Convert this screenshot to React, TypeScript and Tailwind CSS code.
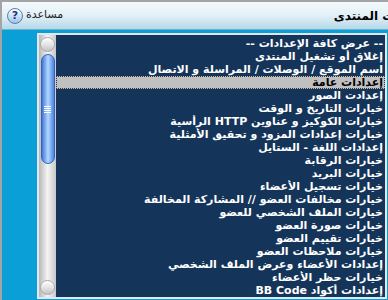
const options = [
  '-- عرض كافة الإعدادات --',
  'إغلاق أو تشغيل المنتدى',
  'اسم الموقع / الوصلات / المراسلة و الاتصال',
  'إعدادات عامة',
  'إعدادت الصور',
  'خيارات التاريخ و الوقت',
  'خيارات الكوكيز و عناوين HTTP الرأسية',
  'خيارات إعدادات المزود و تحقيق الأمثلية',
  'إعدادات اللغة - الستايل',
  'خيارات الرقابة',
  'خيارات البريد',
  'خيارات تسجيل الأعضاء',
  'خيارات مخالفات العضو // المشاركة المخالفة',
  'خيارات الملف الشخصي للعضو',
  'خيارات صورة العضو',
  'خيارات تقييم العضو',
  'خيارات ملاحظات العضو',
  'إعدادات الأعضاء وعرض الملف الشخصي',
  'خيارات حظر الأعضاء',
  'إعدادات أكواد BB Code',
];

const selected = 3;

const RoundButton = () => (
  <div className="mx-auto h-[15px] w-[15px] rounded-full border border-[#a8a8a8] bg-linear-to-b from-[#ffffff] via-[#e4e4e4] to-[#c4c4c4] shadow-[inset_0_1px_1px_#fff]" />
);

const Scrollbar = () => (
  <div className="flex w-[17px] shrink-0 flex-col bg-linear-to-r from-[#b8b8b8] via-[#f4f4f4] to-[#c8c8c8] py-[2px]">
    <RoundButton />
    <div className="mx-auto mt-[2px] flex h-[110px] w-[14px] items-center justify-center rounded-full border border-[#3464b8] bg-linear-to-r from-[#3f78d8] via-[#b4d8ff] to-[#4a82e0]">
      <div className="flex flex-col gap-[1px]">
        <div className="h-px w-[7px] bg-white" />
        <div className="h-px w-[7px] bg-white" />
        <div className="h-px w-[7px] bg-white" />
        <div className="h-px w-[7px] bg-white" />
      </div>
    </div>
    <div className="flex-1" />
    <RoundButton />
  </div>
);

export default function App() {
  return (
    <div className="flex h-[300px] w-[388px] flex-col overflow-hidden border-l-2 border-t-2 border-[#a4a4a4] font-['DejaVu_Sans',sans-serif]">
      {/* header */}
      <div className="flex h-[28px] shrink-0 items-center justify-between border-b border-[#6eb2cc] bg-linear-to-b from-[#f4fafd] via-[#e2f0f7] to-[#b4d8e8]">
        <div className="flex items-center gap-[3px] pl-[5px]">
          <div className="flex h-[16px] w-[16px] items-center justify-center rounded-full border border-[#5a7ea8] bg-linear-to-b from-[#ffffff] to-[#9cc4ec] text-[11px] font-bold leading-none text-[#1a3c78]">
            ?
          </div>
          <span dir="rtl" className="text-[11px] text-[#222]">مساعدة</span>
        </div>
        <span dir="rtl" className="mr-[-40px] whitespace-nowrap text-[12px] font-bold text-black">
          إعدادات المنتدى
        </span>
      </div>

      {/* body */}
      <div className="flex flex-1 bg-[#0a9fd6] pb-[3px] pl-[35px] pr-[1px] pt-[3px]">
        <div className="flex flex-1 border-2 border-[#dfe8ef] bg-[#143459]">
          <Scrollbar />
          <div dir="rtl" className="flex-1 pt-[2px]">
            {options.map((o, i) => (
              <div
                key={i}
                className={
                  i === selected
                    ? 'h-[13px] overflow-hidden whitespace-nowrap bg-[#c0c0c0] pr-[2px] text-[11px] font-bold leading-[13px] text-black outline-1 outline-dotted outline-[#333] -outline-offset-1'
                    : 'h-[13px] overflow-hidden whitespace-nowrap pr-[2px] text-[11px] font-bold leading-[13px] text-white'
                }
              >
                {o}
              </div>
            ))}
          </div>
        </div>
      </div>
    </div>
  );
}
